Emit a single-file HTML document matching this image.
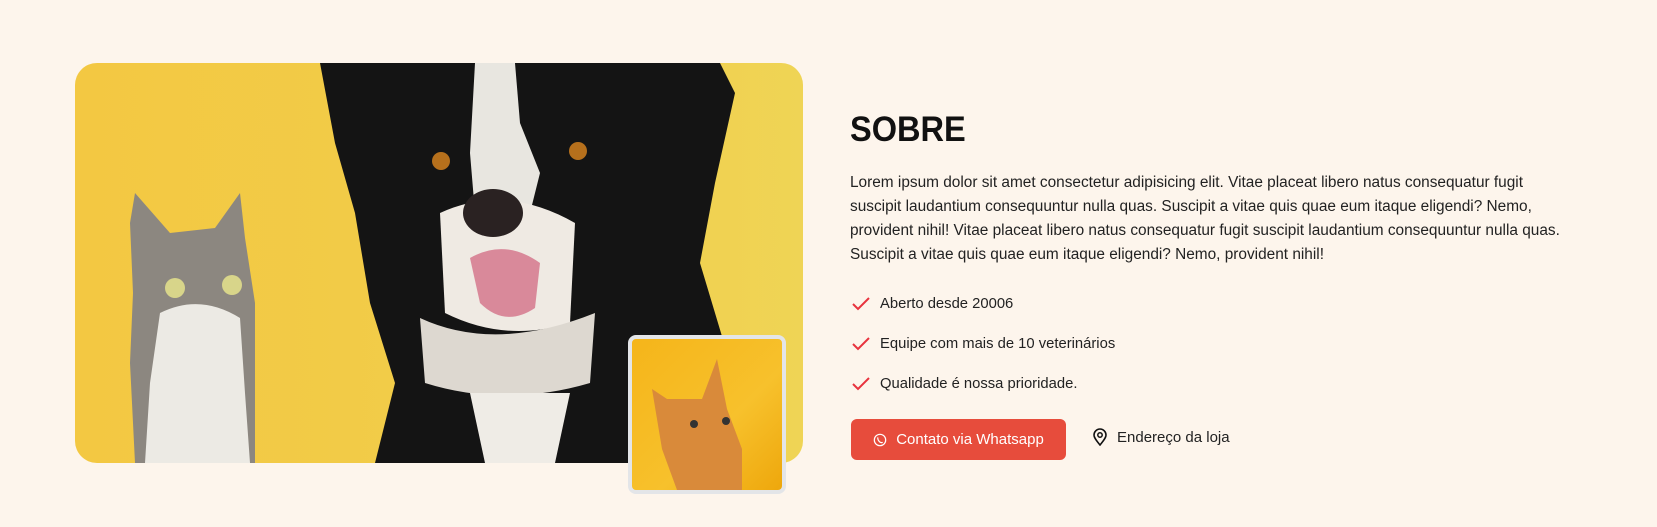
<!DOCTYPE html>
<html><head><meta charset="utf-8"><style>
*{margin:0;padding:0;box-sizing:border-box}
body{width:1657px;height:527px;background:#fdf5ec;font-family:"Liberation Sans",sans-serif;position:relative;overflow:hidden}
.card{position:absolute;left:75px;top:63px;width:728px;height:400px;border-radius:22px;overflow:hidden;background:linear-gradient(90deg,#f3c842,#f2cd4a 60%,#efd455)}
.small{position:absolute;left:628px;top:335px;width:158px;height:159px;border:4px solid #e3e5e8;border-radius:8px;overflow:hidden;background:linear-gradient(135deg,#f5b51a,#f7c12c 60%,#eea70c)}
h1{position:absolute;left:850px;top:110px;font-size:35px;font-weight:700;color:#111;transform:scaleX(0.93);transform-origin:left}
p{position:absolute;left:850px;top:171px;width:714px;font-size:15.4px;line-height:24px;color:#222}
.li{position:absolute;left:852px;font-size:14.8px;color:#222;display:flex;align-items:center;gap:10px}
.btn{position:absolute;left:851px;top:419px;width:215px;height:41px;background:#e74c3c;border-radius:6px;color:#fff;font-size:15px;display:flex;align-items:center;justify-content:center;gap:9px}
.addr{position:absolute;left:1092px;top:428px;font-size:15px;color:#222;display:flex;align-items:center;gap:9px}
</style></head><body>
<div class="card">
<svg width="728" height="400" viewBox="0 0 728 400">
<path d="M245 0 L645 0 L660 30 L640 120 L625 200 L655 300 L690 400 L300 400 L320 320 L295 240 L280 150 L260 80 Z" fill="#141414"/>
<path d="M400 0 L440 0 L445 60 L465 110 L455 150 L400 150 L395 90 Z" fill="#e8e6e0"/>
<path d="M365 150 Q430 120 500 160 L495 260 Q430 280 370 250 Z" fill="#efeae3"/>
<ellipse cx="418" cy="150" rx="30" ry="24" fill="#2a2222"/>
<path d="M395 195 Q430 175 465 200 L460 245 Q430 265 405 240 Z" fill="#d9899a"/>
<path d="M345 255 Q420 290 520 250 L515 320 Q430 345 350 320 Z" fill="#ddd8d0"/>
<path d="M395 330 L495 330 L480 400 L410 400 Z" fill="#efece6"/>
<circle cx="366" cy="98" r="9" fill="#b6701c"/><circle cx="503" cy="88" r="9" fill="#b6701c"/>
<path d="M55 160 L60 130 L95 170 L140 165 L165 130 L170 175 L180 240 L180 400 L60 400 L55 300 L58 230 Z" fill="#8c8780"/>
<path d="M85 250 Q125 230 165 255 L170 330 L175 400 L70 400 L75 320 Z" fill="#eceae4"/>
<circle cx="100" cy="225" r="10" fill="#d8d58a"/><circle cx="157" cy="222" r="10" fill="#d8d58a"/>
</svg>
</div>
<div class="small">
<svg width="150" height="151" viewBox="0 0 150 151"><path d="M20 50 L35 60 L70 60 L85 20 L95 70 L110 110 L110 151 L45 151 L30 110 Z" fill="#d98a3a"/><circle cx="62" cy="85" r="4" fill="#333"/><circle cx="94" cy="82" r="4" fill="#333"/></svg>
</div>
<h1>SOBRE</h1>
<p>Lorem ipsum dolor sit amet consectetur adipisicing elit. Vitae placeat libero natus consequatur fugit suscipit laudantium consequuntur nulla quas. Suscipit a vitae quis quae eum itaque eligendi? Nemo, provident nihil! Vitae placeat libero natus consequatur fugit suscipit laudantium consequuntur nulla quas. Suscipit a vitae quis quae eum itaque eligendi? Nemo, provident nihil!</p>
<div class="li" style="top:296px"><svg width="18" height="14" viewBox="0 0 18 14"><path d="M1 7 L6 12 L17 1" fill="none" stroke="#e8333e" stroke-width="2"/></svg>Aberto desde 20006</div>
<div class="li" style="top:336px"><svg width="18" height="14" viewBox="0 0 18 14"><path d="M1 7 L6 12 L17 1" fill="none" stroke="#e8333e" stroke-width="2"/></svg>Equipe com mais de 10 veterinários</div>
<div class="li" style="top:376px"><svg width="18" height="14" viewBox="0 0 18 14"><path d="M1 7 L6 12 L17 1" fill="none" stroke="#e8333e" stroke-width="2"/></svg>Qualidade é nossa prioridade.</div>
<div class="btn"><svg width="14" height="14" viewBox="0 0 16 16"><circle cx="8" cy="8" r="6.5" fill="none" stroke="#fff" stroke-width="1.4"/><path d="M5.5 5 Q5 8 8 10.5 Q10 11.5 11 10.5" fill="none" stroke="#fff" stroke-width="1.4"/></svg>Contato via Whatsapp</div>
<div class="addr"><svg width="16" height="18" viewBox="0 0 16 18"><path d="M8 17 C3 11 2 9 2 7 A6 6 0 0 1 14 7 C14 9 13 11 8 17 Z" fill="none" stroke="#111" stroke-width="1.6"/><circle cx="8" cy="7" r="2.2" fill="none" stroke="#111" stroke-width="1.5"/></svg>Endereço da loja</div>
</body></html>
